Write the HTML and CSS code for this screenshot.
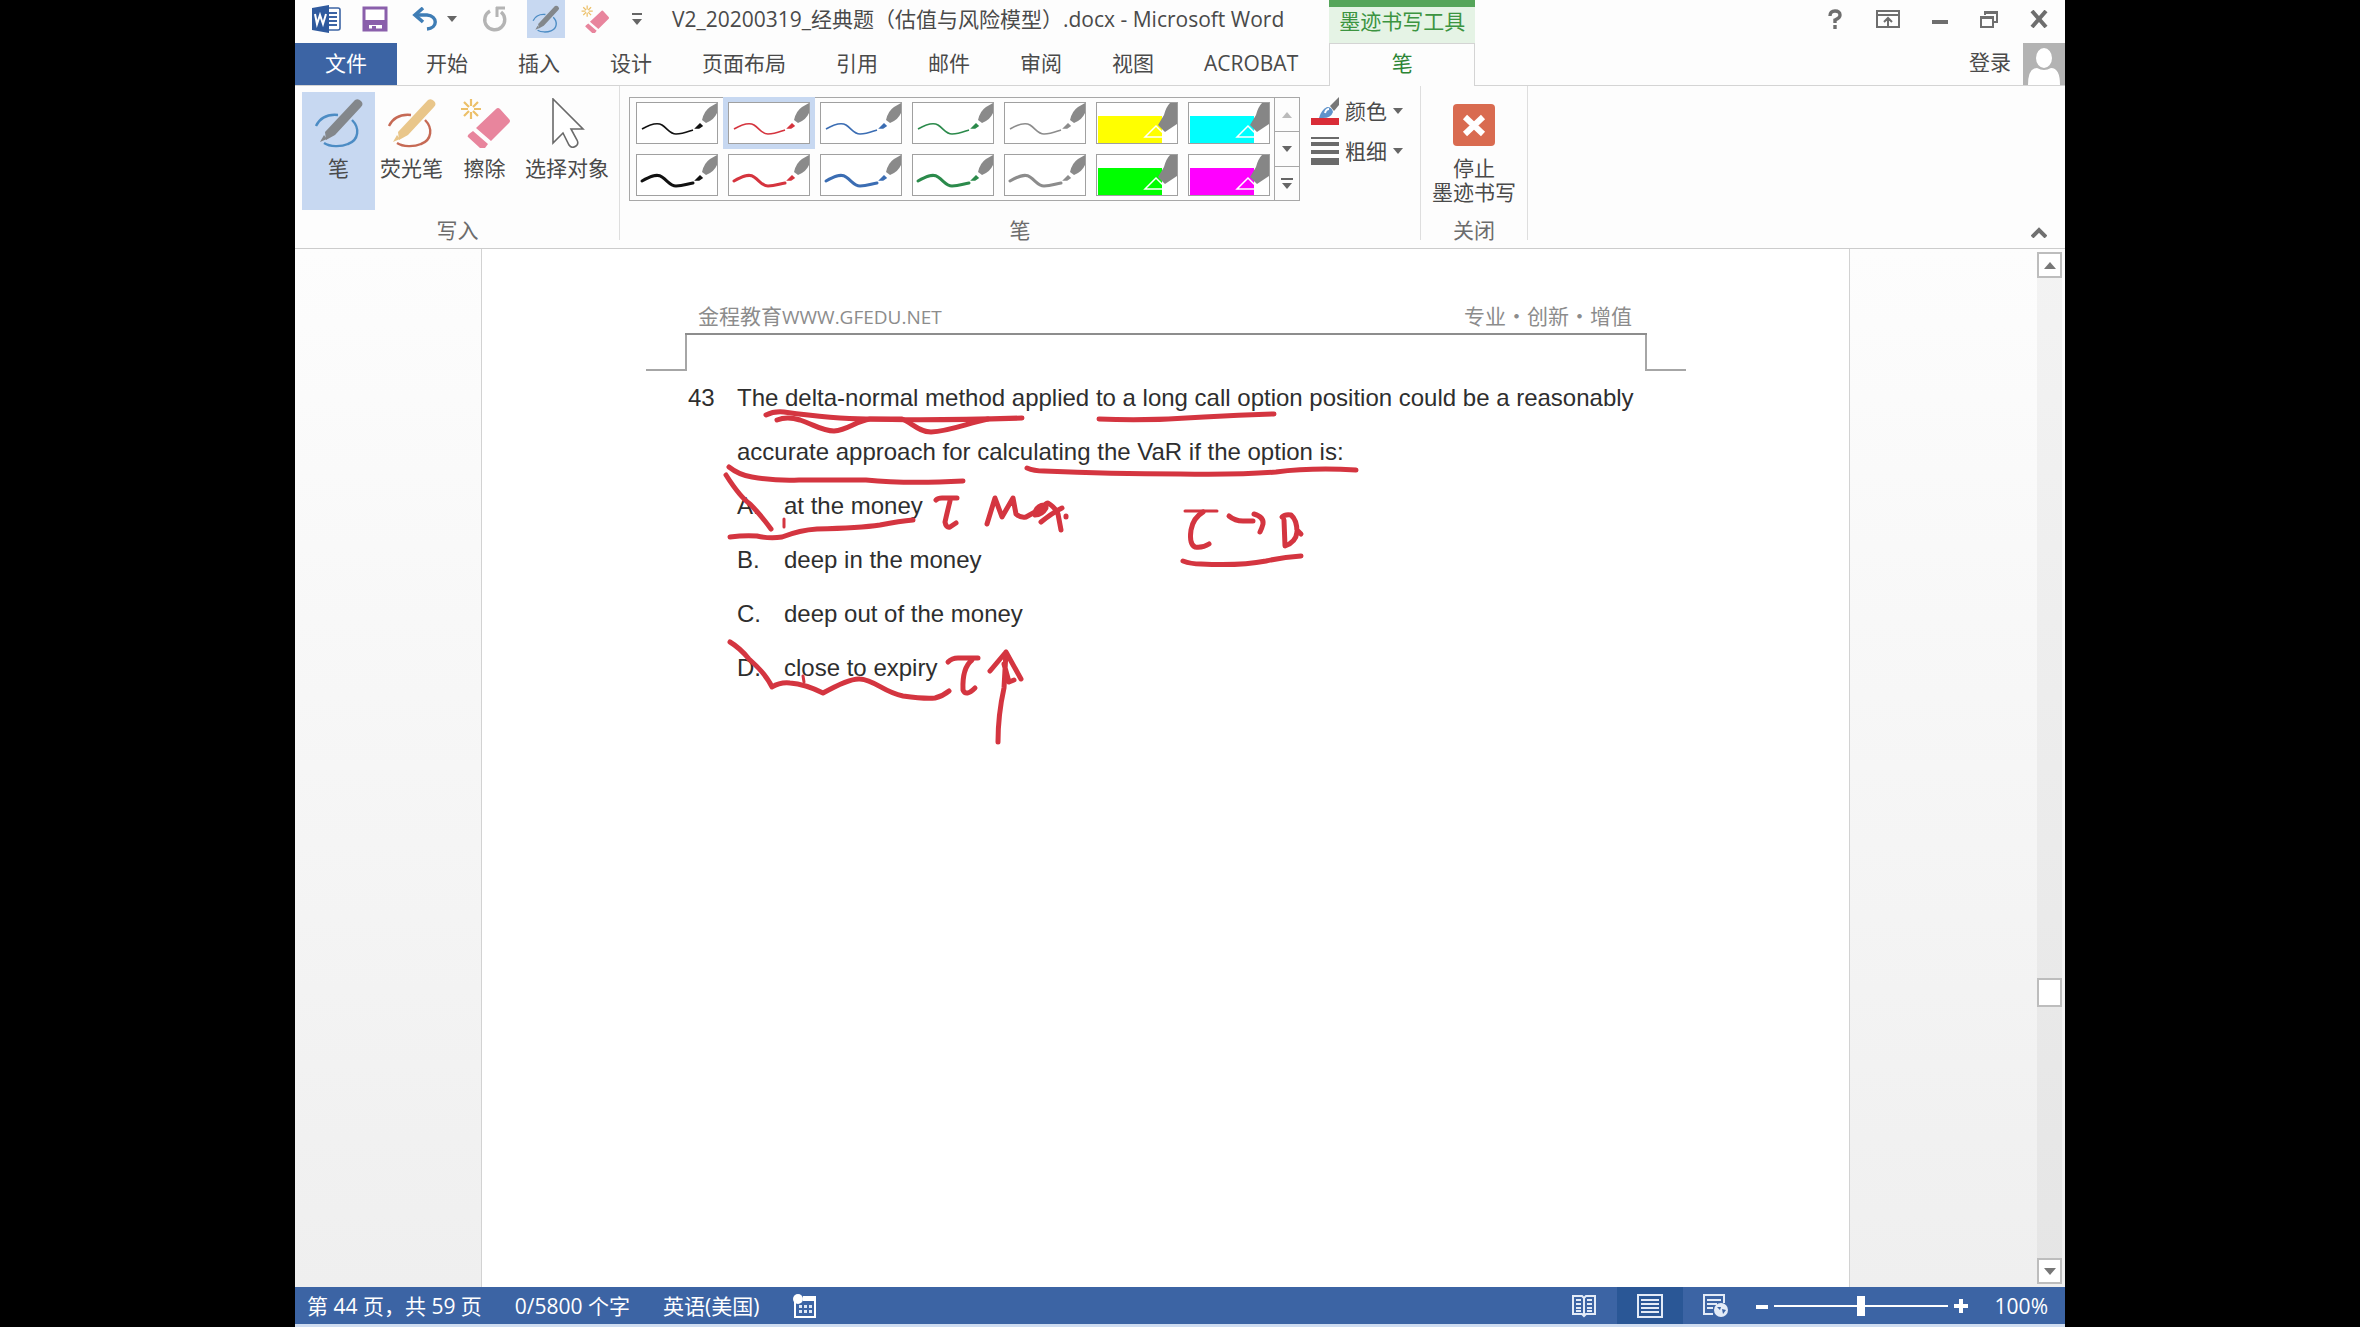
FILE: index.html
```html
<!DOCTYPE html>
<html lang="zh-CN">
<head>
    <meta charset="UTF-8">
    <meta name="viewport" content="width=device-width, initial-scale=1.0">
    <title>V2_20200319_经典题（估值与风险模型）.docx - Microsoft Word</title>
    <link rel="stylesheet" href="styles.css">
</head>
<body>

    <!-- Shared shapes -->
    <svg class="defs" aria-hidden="true">
        <symbol id="nib" viewBox="0 0 80 40">
            <path d="M80 0 L73 4 Q67 8 65 17 L69 20 Q77 17 80 10z" fill="#8a8a8a"/>
            <path d="M59 25 l4-4 2 2 -3 2z" fill="currentColor" stroke="currentColor" stroke-width="1.5"/>
        </symbol>
        <symbol id="thin-pen" viewBox="0 0 80 40">
            <path d="M5 26 C12 22 20 19 25 22 C31 26 33 31 39 31 C46 31 50 29 56 27" fill="none" stroke="currentColor" stroke-width="1.6"/>
            <use href="#nib"/>
        </symbol>
        <symbol id="thick-pen" viewBox="0 0 80 40">
            <path d="M5 26 C12 22 20 18 25 22 C31 26 33 31 39 31 C46 31 50 29 56 28" fill="none" stroke="currentColor" stroke-width="3" stroke-linecap="round"/>
            <use href="#nib"/>
        </symbol>
        <symbol id="marker" viewBox="0 0 80 40">
            <path d="M1 13 H65 V40 H1z" fill="currentColor"/>
            <path d="M80 0 H73 Q69 4 67 12 L61 22 L68 29 L80 21z" fill="#868686"/>
            <path d="M59 23 L48 34 H66 V30z" fill="none" stroke="#fff" stroke-width="1.5"/>
        </symbol>
        <symbol id="pen-circle" viewBox="0 0 50 50">
            <path d="M2 28 C6 20 14 16 24 17 M38 22 C46 30 45 42 34 46 C27 49 16 49 10 45" fill="none" stroke="currentColor" stroke-width="2.4"/>
            <path d="M41 2 Q44 0 47 3 Q50 6 47 9 L21 37 L12 42 L11 34z"/>
            <path d="M10 37 L13 41 L6 44z"/>
        </symbol>
        <symbol id="eraser" viewBox="0 0 50 50">
            <path d="M11 1 v7 M11 14 v7 M1 11 h7 M14 11 h7 M4 4 l5 5 M13 13 l5 5 M18 4 l-5 5 M9 13 l-5 5" stroke="#ecc069" stroke-width="2.2"/>
            <path d="M36 11 Q38 9 40 11 L49 21 Q51 23 49 25 L31 43 L16 30z M13 33 L28 46 L25 50 Q23 52 20 50 L8 39 Q7 38 9 36z" fill="#e8859d"/>
        </symbol>
    </svg>

    <div class="app">
        <header class="header">
            <div class="title-bar">
                <button class="tool" aria-label="Word">
                    <svg width="30" height="30" viewBox="0 0 30 30">
                        <path d="M17 4 H27 Q29 4 29 6 V24 Q29 26 27 26 H17" fill="#fff" stroke="#3c64a4" stroke-width="1.6"/>
                        <path d="M18 9 h8 M18 13 h8 M18 17 h8 M18 21 h8" stroke="#3c64a4" stroke-width="2"/>
                        <path d="M1 4 L18 1 V29 L1 26z" fill="#2f5a9e"/>
                        <path d="M4 10 L6 20 L9 11 L12 20 L15 10" fill="none" stroke="#fff" stroke-width="2"/>
                    </svg>
                </button>
                <button class="tool save" aria-label="保存">
                    <svg width="26" height="26" viewBox="0 0 26 26">
                        <path d="M2 2 H24 V24 H2z" fill="#fff" stroke="#8a5fab" stroke-width="3"/>
                        <path d="M1 14 H25 V25 H20 V19 H7 V25 H1z M10 20 h4 v5 h-4z" fill="#8a5fab"/>
                    </svg>
                </button>
                <button class="tool undo" aria-label="撤消">
                    <svg width="26" height="24" viewBox="0 0 26 24">
                        <path d="M3 8 H15 C26 9 26 21 15 22" fill="none" stroke="#3f7db5" stroke-width="3.4"/>
                        <path d="M11 1 L3 8 L11 15" fill="none" stroke="#3f7db5" stroke-width="3.6"/>
                    </svg>
                    <svg width="10" height="6" viewBox="0 0 10 6"><path d="M0 0 H10 L5 6z" fill="#666"/></svg>
                </button>
                <button class="tool redo" aria-label="重复">
                    <svg width="26" height="26" viewBox="0 0 26 26">
                        <path d="M9 5 A10 10 0 1 0 20 6" fill="none" stroke="#b4b4b4" stroke-width="3.4"/>
                        <path d="M15 2 H24 M16 1 V11" fill="none" stroke="#b4b4b4" stroke-width="3"/>
                    </svg>
                </button>
                <button class="tool ink active" aria-label="笔">
                    <svg class="blue-pen" width="28" height="30"><use href="#pen-circle"/></svg>
                </button>
                <button class="tool" aria-label="橡皮擦">
                    <svg width="28" height="28"><use href="#eraser"/></svg>
                </button>
                <button class="tool more" aria-label="自定义快速访问工具栏">
                    <svg width="10" height="12" viewBox="0 0 10 12"><path d="M0 1 H10" stroke="#666" stroke-width="2"/><path d="M0 6 H10 L5 12z" fill="#666"/></svg>
                </button>
                <h1>V2_20200319_经典题（估值与风险模型）.docx - Microsoft Word</h1>
            </div>

            <nav class="tabs">
                <a class="file" href="#">文件</a>
                <a href="#">开始</a>
                <a href="#">插入</a>
                <a href="#">设计</a>
                <a href="#">页面布局</a>
                <a href="#">引用</a>
                <a href="#">邮件</a>
                <a href="#">审阅</a>
                <a href="#">视图</a>
                <a href="#">ACROBAT</a>
            </nav>

            <div class="context-title">墨迹书写工具</div>
            <a class="context-tab" href="#">笔</a>

            <div class="window-buttons">
                <button aria-label="帮助"><svg width="18" height="20" viewBox="0 0 18 20"><path d="M4 7 Q4 2 9 2 Q14 2 14 6 Q14 9 9 11 V14 M9 16 V20" fill="none" stroke="#6e6e6e" stroke-width="3.4"/></svg></button>
                <button aria-label="功能区显示选项"><svg width="24" height="18" viewBox="0 0 24 18"><path d="M1 1 H23 V17 H1z M1 5 H23 M12 16 V8 M8 12 L12 8 L16 12" fill="none" stroke="#6e6e6e" stroke-width="2"/></svg></button>
                <button aria-label="最小化"><svg width="16" height="18" viewBox="0 0 16 18"><path d="M0 12 H16" stroke="#6e6e6e" stroke-width="4"/></svg></button>
                <button aria-label="还原"><svg width="18" height="18" viewBox="0 0 18 18"><path d="M5 5 V2 H17 V12 H14 M1 7 H13 V17 H1z M1 8 H13 M5 3 H17" fill="none" stroke="#6e6e6e" stroke-width="2"/></svg></button>
                <button aria-label="关闭"><svg width="18" height="18" viewBox="0 0 18 18"><path d="M2 1 L16 17 M16 1 L2 17" stroke="#6e6e6e" stroke-width="4"/></svg></button>
            </div>
            <div class="account">
                <a href="#">登录</a>
                <svg width="42" height="42" viewBox="0 0 42 42">
                    <path d="M0 0 H42 V42 H0z" fill="#b3b3b3"/>
                    <ellipse cx="21" cy="15" rx="8" ry="10" fill="#fff"/>
                    <path d="M5 42 Q5 25 14 25 Q21 29 28 25 Q37 25 37 42z" fill="#fff"/>
                </svg>
            </div>
        </header>

        <section class="ribbon">
            <div class="group write">
                <div class="group-body">
                    <button class="big active"><svg class="blue-pen" width="50" height="50"><use href="#pen-circle"/></svg>笔</button>
                    <button class="big"><svg class="orange-pen" width="50" height="50"><use href="#pen-circle"/></svg>荧光笔</button>
                    <button class="big"><svg width="50" height="50"><use href="#eraser"/></svg>擦除</button>
                    <button class="big"><svg width="50" height="50" viewBox="0 0 50 50"><path d="M11 1 V45 L21 35 L27 47 Q30 51 34 48 Q37 46 35 42 L29 31 H41z" fill="#fff" stroke="#6a6a6a" stroke-width="1.6"/></svg>选择对象</button>
                </div>
                <p class="group-name">写入</p>
            </div>

            <div class="group pens">
                <div class="group-body">
                    <div class="gallery">
                        <div class="cells">
                            <button class="cell black" aria-label="黑色细笔"><svg><use href="#thin-pen"/></svg></button>
                            <button class="cell red selected" aria-label="红色细笔"><svg><use href="#thin-pen"/></svg></button>
                            <button class="cell blue" aria-label="蓝色细笔"><svg><use href="#thin-pen"/></svg></button>
                            <button class="cell green" aria-label="绿色细笔"><svg><use href="#thin-pen"/></svg></button>
                            <button class="cell gray" aria-label="灰色细笔"><svg><use href="#thin-pen"/></svg></button>
                            <button class="cell yellow" aria-label="黄色荧光笔"><svg><use href="#marker"/></svg></button>
                            <button class="cell cyan" aria-label="青色荧光笔"><svg><use href="#marker"/></svg></button>
                            <button class="cell black" aria-label="黑色粗笔"><svg><use href="#thick-pen"/></svg></button>
                            <button class="cell red" aria-label="红色粗笔"><svg><use href="#thick-pen"/></svg></button>
                            <button class="cell blue" aria-label="蓝色粗笔"><svg><use href="#thick-pen"/></svg></button>
                            <button class="cell green" aria-label="绿色粗笔"><svg><use href="#thick-pen"/></svg></button>
                            <button class="cell gray" aria-label="灰色粗笔"><svg><use href="#thick-pen"/></svg></button>
                            <button class="cell lime" aria-label="绿色荧光笔"><svg><use href="#marker"/></svg></button>
                            <button class="cell magenta" aria-label="粉色荧光笔"><svg><use href="#marker"/></svg></button>
                        </div>
                        <div class="gallery-scroll">
                            <button aria-label="上一行" disabled><svg width="10" height="6" viewBox="0 0 10 6"><path d="M0 6 H10 L5 0z" fill="#bbb"/></svg></button>
                            <button aria-label="下一行"><svg width="10" height="6" viewBox="0 0 10 6"><path d="M0 0 H10 L5 6z" fill="#666"/></svg></button>
                            <button aria-label="其他"><svg width="12" height="11" viewBox="0 0 12 11"><path d="M0 1 H12" stroke="#666" stroke-width="2"/><path d="M1 5 H11 L6 11z" fill="#666"/></svg></button>
                        </div>
                    </div>
                    <div class="pen-options">
                        <button>
                            <svg width="28" height="28" viewBox="0 0 28 28">
                                <path d="M28 0 L19 9 L23 14 L28 8z" fill="#777"/>
                                <path d="M8 21 Q10 13 16 10 Q21 10 22 15 Q20 21 12 21z" fill="#5f93cb"/>
                                <path d="M14 16 Q15 12 18 12" stroke="#fff" stroke-width="2" fill="none"/>
                                <path d="M0 21 H28 V28 H0z" fill="#d92c37"/>
                            </svg>
                            颜色
                            <svg width="10" height="6" viewBox="0 0 10 6"><path d="M0 0 H10 L5 6z" fill="#666"/></svg>
                        </button>
                        <button>
                            <svg width="28" height="28" viewBox="0 0 28 28"><path d="M0 0h28v2H0z M0 5h28v4H0z M0 13h28v4H0z M0 21h28v7H0z" fill="#6a6a6a"/></svg>
                            粗细
                            <svg width="10" height="6" viewBox="0 0 10 6"><path d="M0 0 H10 L5 6z" fill="#666"/></svg>
                        </button>
                    </div>
                </div>
                <p class="group-name">笔</p>
            </div>

            <div class="group stop">
                <div class="group-body">
                    <button class="big">
                        <svg width="50" height="50" viewBox="0 0 50 50"><rect x="4" y="6" width="42" height="42" rx="4" fill="#d96b50"/><path d="M16 19 L34 36 M34 19 L16 36" stroke="#fff" stroke-width="6"/></svg>
                        停止<br>墨迹书写
                    </button>
                </div>
                <p class="group-name">关闭</p>
            </div>

            <button class="collapse" aria-label="折叠功能区"><svg width="16" height="11" viewBox="0 0 16 11"><path d="M1 10 L8 3 L15 10" fill="none" stroke="#707070" stroke-width="4"/></svg></button>
        </section>

        <main class="workspace">
            <div class="canvas">
                <article class="page">
                    <div class="page-header">
                        <span>金程教育<span class="site">WWW.GFEDU.NET</span></span>
                        <span>专业・创新・增值</span>
                    </div>
                    <div class="crop-marks"><i></i><i></i></div>

                    <div class="question">
                        <span class="number">43</span>
                        <div class="text">
                            <p>The delta-normal method applied to a long call option position could be a reasonably accurate approach for calculating the VaR if the option is:</p>
                            <ul>
                                <li><b>A.</b>at the money</li>
                                <li><b>B.</b>deep in the money</li>
                                <li><b>C.</b>deep out of the money</li>
                                <li><b>D.</b>close to expiry</li>
                            </ul>
                        </div>

                        <!-- Handwritten ink over the text -->
                        <svg class="handwriting" width="680" height="380" viewBox="688 371 680 380">
                            <path d="M766 415 Q774 411 784 412 Q835 419 866 419 Q927 421 1022 418"/>
                            <path d="M777 420 Q787 416 800 420 C815 425 822 431 834 431 C848 430 856 421 870 419 H902 C912 423 919 432 931 432 C950 431 968 423 988 419"/>
                            <path d="M1099 419 Q1150 421 1204 417 Q1240 415 1274 414"/>
                            <path d="M729 467 Q739 475 752 477 Q775 481 799 480 H866 Q906 484 963 481"/>
                            <path d="M1027 468 Q1034 471 1044 471 Q1110 474 1180 474 Q1240 475 1276 472 C1300 469 1320 468 1356 470"/>
                            <path d="M726 475 Q740 497 750 504 Q760 514 771 529"/>
                            <path d="M730 537 Q745 535 757 536 Q770 539 782 537 Q800 530 817 529 Q860 528 880 525 Q900 521 913 520"/>
                            <path class="fine" d="M784 519 V527"/>
                            <path d="M936 500 Q938 498 942 498 H957 M950 501 Q947 513 945 522 Q946 528 950 527 L956 523"/>
                            <path d="M987 524 L995 498 L1002 517 L1013 498 L1016 514 Q1020 518 1026 517 L1035 512 Q1038 505 1044 505 Q1038 510 1035 515 Q1042 515 1046 508 Q1045 503 1048 503 Q1056 508 1058 514 L1061 530 M1062 508 Q1052 513 1041 522 M1066 516 v1"/>
                            <path class="fine" d="M1185 511 H1217"/>
                            <path d="M1203 512 Q1193 518 1191 530 Q1189 544 1195 547 Q1203 548 1209 544"/>
                            <path d="M1229 516 Q1235 521 1243 521 H1253 M1254 514 Q1264 517 1263 524 Q1262 528 1260 532"/>
                            <path d="M1284 520 L1285 546 Q1296 542 1297 532 Q1297 520 1291 515 Q1285 514 1282 517 M1297 530 L1301 534"/>
                            <path d="M1183 561 Q1191 564 1201 564 Q1240 566 1266 561 Q1284 557 1301 556"/>
                            <path d="M730 642 Q740 648 749 659 Q766 674 772 687 Q780 682 790 683 Q805 684 823 693 Q850 678 860 679 C875 680 883 692 903 696 Q925 699 935 698 Q943 696 949 691"/>
                            <path class="fine" d="M803 676 L804 682"/>
                            <path d="M948 662 Q952 658 958 658 H978 M972 660 Q962 668 963 690 Q966 697 975 688"/>
                            <path d="M998 742 Q998 715 1004 688 L1006 652 L990 671 M1006 652 L1021 679 M1004 664 L1009 682 L1014 680"/>
                        </svg>
                    </div>
                </article>
            </div>
            <div class="scrollbar">
                <button aria-label="向上滚动"><svg width="12" height="7" viewBox="0 0 12 7"><path d="M0 7 H12 L6 0z" fill="#777"/></svg></button>
                <div class="track"><div class="thumb"></div></div>
                <button aria-label="向下滚动"><svg width="12" height="7" viewBox="0 0 12 7"><path d="M0 0 H12 L6 7z" fill="#777"/></svg></button>
            </div>
        </main>

        <footer class="status">
            <span>第 44 页，共 59 页</span>
            <span>0/5800 个字</span>
            <span>英语(美国)</span>
            <button aria-label="宏录制"><svg width="24" height="24" viewBox="0 0 24 24"><path d="M3 6 V23 H23 V3 H11" fill="none" stroke="#fff" stroke-width="2"/><path d="M11 2 H24 V7 H11z" fill="#fff"/><circle cx="6" cy="5" r="5" fill="#fff"/><path d="M7 11h3v3H7z M12 11h3v3h-3z M17 11h3v3h-3z M7 16h3v3H7z M12 16h3v3h-3z M17 16h3v3h-3z" fill="#dfe8f5"/></svg></button>

            <div class="views">
                <button aria-label="阅读视图"><svg width="24" height="24" viewBox="0 0 24 24"><path d="M1 2 H10 L12 4 L14 2 H23 V20 H14 L12 22 L10 20 H1z M12 4 V23 M4 6h5 M4 10h5 M4 14h5 M4 17h5 M15 6h5 M15 10h5 M15 14h5 M15 17h5" fill="none" stroke="#e3ebf7" stroke-width="2"/></svg></button>
                <button class="active" aria-label="页面视图"><svg width="26" height="24" viewBox="0 0 26 24"><path d="M1 1 H25 V23 H1z M4 6h18 M4 10h18 M4 14h18 M4 18h18" fill="none" stroke="#e3ebf7" stroke-width="2"/></svg></button>
                <button aria-label="Web 版式视图"><svg width="26" height="24" viewBox="0 0 26 24"><path d="M10 20 H1 V1 H21 V9 M4 6h14 M4 10h10 M4 14h6" fill="none" stroke="#e3ebf7" stroke-width="2"/><circle cx="18" cy="16" r="7" fill="#e3ebf7"/><path d="M14 13 L18 13 L17 16z M19 15 L23 16 L20 20z" fill="#3c64a4"/></svg></button>
            </div>
            <div class="zoom">
                <button aria-label="缩小"><svg width="12" height="14" viewBox="0 0 12 14"><path d="M0 8 H12" stroke="#fff" stroke-width="4"/></svg></button>
                <input type="range" min="0" max="200" value="100" aria-label="显示比例">
                <button aria-label="放大"><svg width="14" height="14" viewBox="0 0 14 14"><path d="M0 7 H14 M7 0 V14" stroke="#fff" stroke-width="4"/></svg></button>
            </div>
            <span class="percent">100%</span>
        </footer>
    </div>

</body>
</html>
```
FILE: styles.css
```css
* {
    box-sizing: border-box;
}

body {
    margin: 0;
    background-color: #000;
    color: #4a4a4a;
    font-family: "Open Sans", "Noto Sans CJK SC", sans-serif;
    font-size: 21px;
    line-height: 24px;
}

button {
    padding: 0;
    border: none;
    background: none;
    color: inherit;
    font: inherit;
}

a {
    color: inherit;
    text-decoration: none;
}

h1, p, ul {
    margin: 0;
    padding: 0;
    font-weight: normal;
}

svg {
    display: block;
    flex: none;
}

.defs {
    position: absolute;
    width: 0;
    height: 0;
}

.app {
    display: flex;
    flex-direction: column;
    width: 75%;
    min-height: 100vh;
    margin: 0 auto;
    background-color: #fdfdfd;
    border-bottom: 3px solid #cfdcf0;
}

/* Title bar and tabs */
.header {
    display: grid;
    grid-template-columns: auto auto 1fr;
    grid-template-rows: 43px 43px;
}

.title-bar {
    grid-column: 1;
    grid-row: 1;
    display: flex;
    align-items: center;
    padding-left: 16px;
    padding-bottom: 5px;
}

.title-bar h1 {
    margin-left: 30px;
    font-size: 21px;
    white-space: nowrap;
}

.tool {
    display: flex;
    align-items: center;
}

.save {
    margin-left: 21px;
}

.undo {
    gap: 9px;
    margin-left: 24px;
}

.redo {
    margin: 0 20px 0 24px;
}

.ink {
    justify-content: center;
    width: 38px;
    height: 38px;
    margin-right: 16px;
}

.more {
    margin-left: 23px;
}

.active {
    background-color: #c7d8f1;
}

.tabs {
    grid-column: 1;
    grid-row: 2;
    display: flex;
    padding-right: 6px;
    border-bottom: 1px solid #d4d4d4;
    line-height: 40px;
}

.tabs a {
    padding: 0 25px;
}

.tabs .file {
    margin-right: 4px;
    padding: 0 30px;
    background-color: #3c64a4;
    color: #fff;
}

.context-title {
    grid-column: 2;
    grid-row: 1;
    padding: 0 10px;
    border-top: 7px solid #55a55a;
    background-color: #e5f3e5;
    color: #3c9440;
    line-height: 28px;
}

.context-tab {
    grid-column: 2;
    grid-row: 2;
    border: 1px solid #d4d4d4;
    border-bottom: none;
    color: #2c8534;
    line-height: 38px;
    text-align: center;
}

.window-buttons {
    grid-column: 3;
    grid-row: 1;
    display: flex;
    justify-content: flex-end;
    align-items: center;
    gap: 32px;
    padding: 0 17px 5px 0;
}

.account {
    grid-column: 3;
    grid-row: 2;
    display: flex;
    justify-content: flex-end;
    gap: 12px;
    border-bottom: 1px solid #d4d4d4;
    line-height: 38px;
}

/* Ribbon */
.ribbon {
    display: flex;
    height: 163px;
    padding-bottom: 8px;
    border-bottom: 1px solid #ccc;
}

.group {
    display: flex;
    flex-direction: column;
    justify-content: space-between;
    padding-top: 6px;
    border-right: 1px solid #dedede;
}

.group-body {
    display: flex;
}

.group-name {
    color: #6c6c6c;
    line-height: 20px;
    text-align: center;
}

.write {
    padding: 6px 6px 0 7px;
}

.big {
    display: flex;
    flex-direction: column;
    align-items: center;
    height: 118px;
    padding: 6px 4px 0;
    text-align: center;
    white-space: nowrap;
}

.big svg {
    margin-bottom: 8px;
}

.write .big {
    min-width: 73px;
}

.write .big:last-child {
    min-width: 92px;
}

.blue-pen {
    color: #4c8cc4;
    fill: #83878b;
}

.orange-pen {
    color: #c66a55;
    fill: #e9c68a;
}

.pens .group-body {
    gap: 11px;
    padding: 5px 17px 0 9px;
}

.gallery {
    display: flex;
    border: 1px solid #a8a8a8;
}

.cells {
    display: grid;
    grid-template-columns: repeat(7, 82px);
    gap: 10px;
    padding: 4px 4px 4px 6px;
}

.cell {
    width: 82px;
    height: 42px;
    border: 1px solid #a0a0a0;
    background-color: #fff;
}

.cell svg {
    width: 80px;
    height: 40px;
}

.selected {
    box-shadow: 0 0 0 5px #c7d8f1;
}

.black { color: #111; }
.red { color: #d5343e; }
.blue { color: #3b6db3; }
.green { color: #2b8a4b; }
.gray { color: #8c8c8c; }
.yellow { color: #ff0; }
.cyan { color: #0ff; }
.lime { color: #0f0; }
.magenta { color: #f0f; }

.gallery-scroll {
    display: flex;
    flex-direction: column;
    width: 25px;
    border-left: 1px solid #a8a8a8;
}

.gallery-scroll button {
    display: flex;
    flex: 1;
    justify-content: center;
    align-items: center;
}

.gallery-scroll button + button {
    border-top: 1px solid #a8a8a8;
}

.pen-options {
    display: flex;
    flex-direction: column;
    gap: 12px;
}

.pen-options button {
    display: flex;
    align-items: center;
    gap: 6px;
    height: 28px;
}

.stop .big {
    padding: 6px 11px 0;
}

.collapse {
    align-self: flex-end;
    margin: 0 18px 2px auto;
}

/* Document */
.workspace {
    display: flex;
    flex: 1;
    background: linear-gradient(#fdfdfd, #efefef);
}

.canvas {
    display: flex;
    flex: 1;
    padding: 0 187px 0 186px;
}

.page {
    flex: 1;
    padding: 55px 202px 55px 203px;
    border: solid #d2d2d2;
    border-width: 0 1px;
    background-color: #fff;
}

.page-header {
    display: flex;
    justify-content: space-between;
    padding: 0 15px 4px 13px;
    border-bottom: 2px solid #8d8d8d;
    color: #8c8c8c;
}

.site {
    font-size: 19px;
}

.crop-marks {
    display: flex;
    justify-content: space-between;
    height: 36px;
    margin: 0 -39px;
}

.crop-marks i {
    width: 41px;
    border: solid #a6a6a6;
    border-width: 0 2px 2px 0;
}

.crop-marks i:last-child {
    border-width: 0 0 2px 2px;
}

.question {
    position: relative;
    display: flex;
    margin-left: 3px;
    color: #2e2e2e;
    font-family: "Liberation Sans", Arial, sans-serif;
    font-size: 24px;
    line-height: 54px;
}

.number {
    width: 49px;
}

.text {
    flex: 1;
}

.question ul {
    list-style: none;
}

.question li {
    display: flex;
}

.question b {
    width: 47px;
    font-weight: normal;
}

.handwriting {
    position: absolute;
    top: 0;
    left: 0;
    fill: none;
    stroke: #d43540;
    stroke-width: 5;
    stroke-linecap: round;
    stroke-linejoin: round;
}

.fine {
    stroke-width: 3;
}

.scrollbar {
    display: flex;
    flex-direction: column;
    width: 28px;
    padding: 3px 3px 3px 0;
}

.scrollbar button, .thumb {
    display: flex;
    justify-content: center;
    align-items: center;
    height: 26px;
    border: 2px solid #bdbdbd;
    background-color: #fff;
}

.track {
    display: flex;
    flex: 1;
    flex-direction: column;
    background-color: rgba(0, 0, 0, 0.04);
}

.thumb {
    height: 29px;
    margin-top: 700px;
}

/* Status bar */
.status {
    display: flex;
    align-items: center;
    gap: 33px;
    height: 37px;
    padding: 0 17px 0 12px;
    background-color: #3c64a4;
    color: #fff;
}

.views {
    display: flex;
    align-self: stretch;
    margin-left: auto;
}

.views button {
    display: flex;
    justify-content: center;
    align-items: center;
    width: 66px;
}

.views .active {
    background-color: #2a5796;
}

.zoom {
    display: flex;
    align-items: center;
    gap: 6px;
    margin-left: -26px;
}

.zoom input {
    appearance: none;
    width: 174px;
    height: 20px;
    margin: 0;
    background: linear-gradient(#fff, #fff) center / 100% 2px no-repeat;
}

.zoom input::-webkit-slider-thumb {
    appearance: none;
    width: 8px;
    height: 20px;
    background-color: #fff;
}

.percent {
    margin-left: -6px;
}
```
